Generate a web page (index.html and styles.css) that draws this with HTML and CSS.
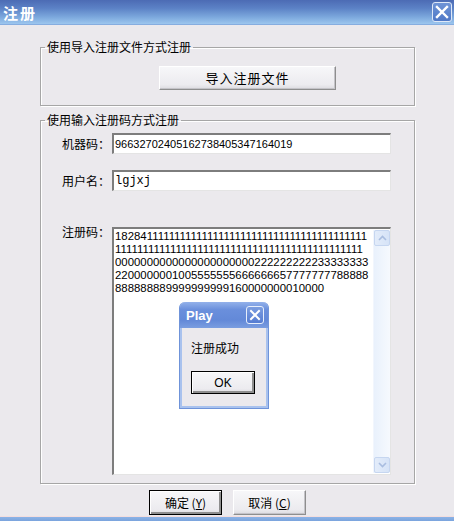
FILE: index.html
```html
<html>
<head>
  <meta charset="utf-8">
  <title>注册</title>
  <link rel="stylesheet" href="styles.css">
</head>
<body>
<div class="window">
  <div class="titlebar">
    <span class="title">注册</span>
    <span class="close">
      <svg width="14" height="14" viewBox="0 0 14 14"><path d="M2 2 L12 12 M12 2 L2 12" stroke="#fff" stroke-width="2.4" stroke-linecap="square"/></svg>
    </span>
  </div>
  <div class="content">
    <fieldset class="group group-file">
      <legend>使用导入注册文件方式注册</legend>
      <button class="btn btn-import">导入注册文件</button>
    </fieldset>
    <fieldset class="group group-code">
      <legend>使用输入注册码方式注册</legend>
      <div class="row">
        <label>机器码：</label>
        <div class="field">96632702405162738405347164019</div>
      </div>
      <div class="row row-user">
        <label>用户名：</label>
        <div class="field field-mono">lgjxj</div>
      </div>
      <div class="row row-code">
        <label>注册码：</label>
        <div class="field textarea">
          <div class="text">182841111111111111111111111111111111111111111
111111111111111111111111111111111111111111111
0000000000000000000000222222222233333333
2200000001005555555666666657777777788888
888888889999999999160000000010000</div>
          <div class="scrollbar">
            <div class="arrow arrow-up">
              <svg width="9" height="6" viewBox="0 0 9 6"><path d="M1 5 L4.5 1.5 L8 5" fill="none" stroke="#a9bde0" stroke-width="1.6"/></svg>
            </div>
            <div class="track"></div>
            <div class="arrow arrow-down">
              <svg width="9" height="6" viewBox="0 0 9 6"><path d="M1 1 L4.5 4.5 L8 1" fill="none" stroke="#a9bde0" stroke-width="1.6"/></svg>
            </div>
          </div>
        </div>
      </div>
    </fieldset>
    <div class="actions">
      <button class="btn btn-default">确定 (<u>Y</u>)</button>
      <button class="btn">取消 (<u>C</u>)</button>
    </div>
  </div>
  <div class="frame-bottom"></div>

  <div class="msgbox">
    <div class="msgbox-title">
      <span>Play</span>
      <span class="msgbox-close">
        <svg width="12" height="12" viewBox="0 0 12 12"><path d="M2 2 L10 10 M10 2 L2 10" stroke="#fff" stroke-width="2" stroke-linecap="square"/></svg>
      </span>
    </div>
    <div class="msgbox-body">
      <div class="msgbox-text">注册成功</div>
      <button class="btn btn-ok">OK</button>
    </div>
  </div>
</div>
</body>
</html>
```

FILE: styles.css
```css
body {
  margin: 0;
  background-color: #ebe9ed;
  font-family: "Noto Sans CJK SC", "Liberation Sans", sans-serif;
  font-size: 12px;
  color: #000;
}
.window {
  position: relative;
  width: 454px;
  height: 521px;
  overflow: hidden;
}
.titlebar {
  height: 25px;
  box-sizing: border-box;
  display: flex;
  align-items: center;
  justify-content: space-between;
  padding: 0 2px 0 3px;
  background: linear-gradient(to bottom, #4c6bb4 0%, #5c82c6 35%, #7ba7dc 70%, #9cc6ee 100%);
  border-bottom: 1px solid #86ade0;
}
.titlebar .title {
  color: #fff;
  font-weight: bold;
  font-size: 15px;
  letter-spacing: 2px;
  line-height: 17px;
}
.titlebar .close {
  width: 18px;
  height: 18px;
  display: flex;
  align-items: center;
  justify-content: center;
  border: 1px solid #dfe8f7;
  border-radius: 3px;
  background: linear-gradient(to bottom, #6f94d6, #4f78c6);
}
.content {
  padding: 15px 39px 0 40px;
}
.group {
  margin: 0;
  padding: 0 4px;
  border: 1px solid #a6a6a6;
  box-shadow: inset 1px 1px 0 #fff, 1px 1px 0 #fff;
}
.group legend {
  padding: 0 2px;
  line-height: 14px;
  font-size: 12px;
}
.group-file {
  height: 66px;
  box-sizing: border-box;
}
.btn {
  font-family: "Noto Sans CJK SC", "Liberation Sans", sans-serif;
  font-size: 12px;
  color: #000;
  background: linear-gradient(to bottom, #f7f7f9, #ecebef 80%, #dcdbe0);
  border: 1px solid;
  border-color: #fff #8e8e8e #8e8e8e #fff;
  box-shadow: inset -1px -1px 0 #c4c3c8;
  padding: 0;
  line-height: 14px;
}
.btn-import {
  display: block;
  width: 177px;
  height: 24px;
  margin: 12px 0 0 114px;
  font-size: 13px;
  letter-spacing: 1px;
}
.group-code {
  margin-top: 7px;
  height: 371px;
  box-sizing: border-box;
}
.row {
  display: flex;
  align-items: center;
  margin: 6px 0 0 17px;
}
.row label {
  width: 50px;
  font-size: 12px;
}
.row-user {
  margin-top: 16px;
}
.row-code {
  margin-top: 36px;
  align-items: flex-start;
}
.row-code label {
  margin-top: -4px;
}
.field {
  width: 279px;
  height: 21px;
  box-sizing: border-box;
  background: #fff;
  border-style: solid;
  border-width: 2px 1px 1px 2px;
  border-color: #7d7d7d #e4e4e4 #e4e4e4 #7d7d7d;
  padding: 0 1px;
  font-family: "Liberation Sans", sans-serif;
  font-size: 11px;
  line-height: 18px;
}
.field-mono {
  font-family: "Liberation Mono", monospace;
  font-size: 12px;
}
.textarea {
  height: 248px;
  display: flex;
  padding: 0 0 0 1px;
}
.textarea .text {
  flex: 1;
  white-space: pre;
  overflow: hidden;
  line-height: 13px;
  padding-top: 1px;
  font-size: 11.4px;
}
.scrollbar {
  width: 16px;
  display: flex;
  flex-direction: column;
  background: linear-gradient(to right, #e9f1fc, #f6f9fe);
  border-left: 1px solid #f2f6fd;
  margin: 1px 0 1px 0;
}
.scrollbar .arrow {
  height: 16px;
  box-sizing: border-box;
  display: flex;
  align-items: center;
  justify-content: center;
  background: linear-gradient(to right, #e3ecfa, #d6e3f7);
  border: 1px solid #c6d6f0;
  border-radius: 2px;
}
.scrollbar .track {
  flex: 1;
}
.actions {
  display: flex;
  justify-content: center;
  gap: 11px;
  margin: 6px 0 0 0;
}
.actions .btn {
  width: 73px;
  height: 25px;
}
.actions .btn u {
  text-decoration: underline;
}
.actions .btn-default {
  border: 1px solid #000;
  box-shadow: inset 1px 1px 0 #fff, inset -2px -2px 0 #8e8e8e;
}
.frame-bottom {
  position: absolute;
  left: 0;
  right: 0;
  bottom: 0;
  height: 4px;
  border-top: 1px solid #f3dede;
  background: linear-gradient(to bottom, #8cb3e6, #7aa4dd);
}
.msgbox {
  position: absolute;
  left: 179px;
  top: 302px;
  width: 90px;
  height: 107px;
  box-sizing: border-box;
  border: 1px solid #6f93d9;
  border-top: none;
  border-radius: 6px 6px 0 0;
  background: #a9c2ee;
  padding: 0 2px 2px 2px;
  display: flex;
  flex-direction: column;
}
.msgbox-title {
  height: 26px;
  margin: 0 -2px;
  border-radius: 6px 6px 0 0;
  background: linear-gradient(to bottom, #93b1ea, #6a8fdc 30%, #6389d8 70%, #7a9de0);
  display: flex;
  align-items: center;
  justify-content: space-between;
  padding: 0 4px 0 6px;
  color: #fff;
  font-family: "Liberation Sans", sans-serif;
  font-weight: bold;
  font-size: 13px;
}
.msgbox-close {
  width: 18px;
  height: 18px;
  box-sizing: border-box;
  display: flex;
  align-items: center;
  justify-content: center;
  border: 1px solid #e6eefb;
  border-radius: 3px;
  background: linear-gradient(to bottom, #7b9de0, #557cd2);
}
.msgbox-body {
  flex: 1;
  background: #ebe9ed;
  padding: 0 0 0 9px;
}
.msgbox-text {
  margin-top: 12px;
  font-size: 12px;
  line-height: 16px;
}
.btn-ok {
  display: block;
  margin-top: 15px;
  width: 64px;
  height: 23px;
  border: 1px solid #000;
  box-shadow: inset 1px 1px 0 #fff, inset -2px -2px 0 #8e8e8e;
  font-family: "Liberation Sans", sans-serif;
  font-size: 12px;
}
```
